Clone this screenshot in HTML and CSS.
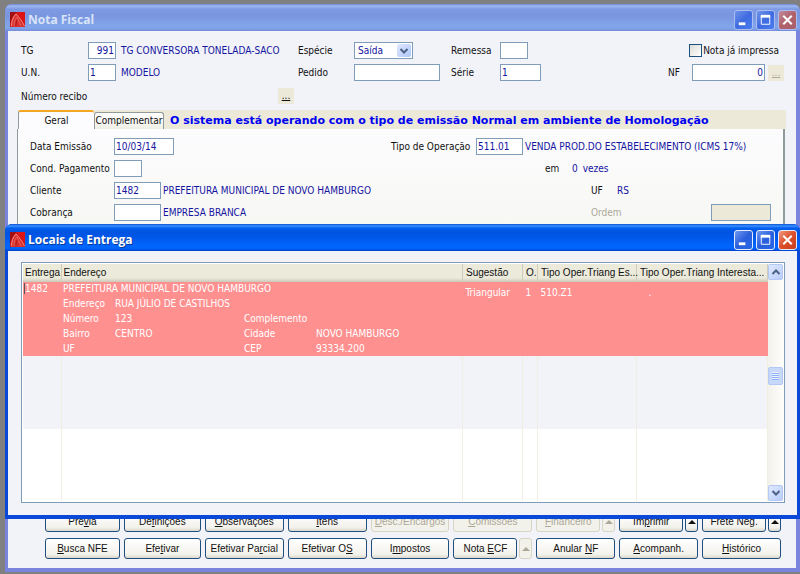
FILE: index.html
```
<!DOCTYPE html>
<html lang="pt-BR">
<head>
    <meta charset="UTF-8">
    <meta name="viewport" content="width=device-width, initial-scale=1.0">
    <title>Nota Fiscal</title>
    <link rel="stylesheet" href="styles.css">
</head>
<body>
    <svg width="0" height="0" class="sprites" aria-hidden="true">
        <symbol id="app-icon" viewBox="0 0 15 15">
            <rect width="15" height="15" fill="#d01416"/>
            <path d="M0 0h6L2 6 0 12z" fill="#a01012"/>
            <path d="M6 0h9v12L9 3z" fill="#dc1416"/>
            <path d="M1 15C1 9 3 4 6 2c3 3 6 8 9 13z" fill="#d9302e"/>
            <path d="M1.500 14C1.500 9 3 5 6 2M6 2c3 3 6 7 8.500 12" fill="none" stroke="#f59a94" stroke-width="0.9"/>
            <path d="M4 14c0-4 1-7 3-9M7 5l4 9" fill="none" stroke="#ee6a64" stroke-width="0.8"/>
            <path d="M6 14c0-2 0-4 1-6" fill="none" stroke="#9c1012" stroke-width="0.8"/>
        </symbol>
        <symbol id="win-min" viewBox="0 0 18 18"><path d="M4 13h7" stroke="#fff" stroke-width="3"/></symbol>
        <symbol id="win-max" viewBox="0 0 18 18"><path d="M4 5h10" stroke="#fff" stroke-width="3"/><path d="M4.500 5v8.500h9V5" fill="none" stroke="#fff"/></symbol>
        <symbol id="win-close" viewBox="0 0 18 18"><path d="M4.500 4.500l9 9M13.500 4.500l-9 9" stroke="#fff" stroke-width="2.200"/></symbol>
        <symbol id="chev-up" viewBox="0 0 10 10"><path d="M1.500 7L5 3.500 8.500 7" fill="none" stroke="#4d6185" stroke-width="2"/></symbol>
        <symbol id="chev-down" viewBox="0 0 10 10"><path d="M1.500 3L5 6.500 8.500 3" fill="none" stroke="#4d6185" stroke-width="2"/></symbol>
        <symbol id="arrow-up" viewBox="0 0 8 4"><path d="M0 4l4-4 4 4z" fill="currentColor"/></symbol>
    </svg>

    <main class="window inactive">
        <header class="titlebar">
            <svg class="app-icon"><use href="#app-icon"/></svg>
            <h1>Nota Fiscal</h1>
            <button class="win-btn" aria-label="Minimizar"><svg><use href="#win-min"/></svg></button>
            <button class="win-btn" aria-label="Maximizar"><svg><use href="#win-max"/></svg></button>
            <button class="win-btn close" aria-label="Fechar"><svg><use href="#win-close"/></svg></button>
        </header>

        <div class="content">
            <form class="form top-form">
                <label for="tg">TG</label>
                <div class="field"><input id="tg" class="w-xs right" value="991"><output>TG CONVERSORA TONELADA-SACO</output></div>
                <label for="especie">Espécie</label>
                <div class="combo">
                    <select id="especie"><option>Saída</option></select>
                    <span class="combo-arrow"><svg><use href="#chev-down"/></svg></span>
                </div>
                <label for="remessa">Remessa</label>
                <input id="remessa" class="w-xs">
                <div class="field end check"><input type="checkbox" id="impressa"><label for="impressa">Nota já impressa</label></div>

                <label for="un">U.N.</label>
                <div class="field"><input id="un" class="w-xs" value="1"><output>MODELO</output></div>
                <label for="pedido">Pedido</label>
                <input id="pedido" class="w-lg">
                <label for="serie">Série</label>
                <input id="serie" class="w-sm" value="1">
                <div class="field end nf"><label for="nf">NF</label><input id="nf" class="w-md right" value="0"><button type="button" class="dots" disabled>...</button></div>

                <span class="recibo">Número recibo</span>
                <button type="button" class="dots recibo-btn" aria-label="Número recibo">...</button>
            </form>

            <div class="tabs">
                <button class="tab active">Geral</button>
                <button class="tab">Complementar</button>
                <p class="notice">O sistema está operando com o tipo de emissão Normal em ambiente de Homologação</p>
            </div>

            <section class="panel">
                <form class="form panel-form">
                    <label for="data">Data Emissão</label>
                    <div class="field"><input id="data" class="w-date" value="10/03/14"></div>
                    <label for="operacao">Tipo de Operação</label>
                    <div class="field"><input id="operacao" class="w-code" value="511.01"><output>VENDA PROD.DO ESTABELECIMENTO (ICMS 17%)</output></div>

                    <label for="cond">Cond. Pagamento</label>
                    <div class="field"><input id="cond" class="w-xs"></div>
                    <div class="field parcelas"><span>em</span><output>0</output><output>vezes</output></div>

                    <label for="cliente">Cliente</label>
                    <div class="field"><input id="cliente" class="w-code" value="1482"><output>PREFEITURA MUNICIPAL DE NOVO HAMBURGO</output></div>
                    <div class="field uf"><span>UF</span><output>RS</output></div>

                    <label for="cobranca">Cobrança</label>
                    <div class="field"><input id="cobranca" class="w-code"><output>EMPRESA BRANCA</output></div>
                    <div class="field uf ordem"><label for="ordem">Ordem</label><input id="ordem" class="w-date" disabled></div>
                </form>
            </section>

            <div class="actions">
                <button>Pré<u>v</u>ia</button>
                <button>De<u>f</u>inições</button>
                <button><u>O</u>bservações</button>
                <button><u>I</u>tens</button>
                <button disabled><u>D</u>esc./Encargos</button>
                <button disabled><u>C</u>omissões</button>
                <div class="split">
                    <button disabled><u>F</u>inanceiro</button>
                    <button class="more" aria-label="Mais" disabled><svg><use href="#arrow-up"/></svg></button>
                </div>
                <div class="split">
                    <button>Im<u>p</u>rimir</button>
                    <button class="more" aria-label="Mais"><svg><use href="#arrow-up"/></svg></button>
                </div>
                <div class="split">
                    <button>Frete Ne<u>g</u>.</button>
                    <button class="more" aria-label="Mais"><svg><use href="#arrow-up"/></svg></button>
                </div>

                <button><u>B</u>usca NFE</button>
                <button>Efe<u>t</u>ivar</button>
                <button>Efetivar Pa<u>r</u>cial</button>
                <button>Efetivar O<u>S</u></button>
                <button>I<u>m</u>postos</button>
                <div class="split">
                    <button>Nota <u>E</u>CF</button>
                    <button class="more" aria-label="Mais" disabled><svg><use href="#arrow-up"/></svg></button>
                </div>
                <button>Anular <u>N</u>F</button>
                <button><u>A</u>companh.</button>
                <button><u>H</u>istórico</button>
            </div>
        </div>
    </main>

    <section class="window dialog">
        <header class="titlebar">
            <svg class="app-icon"><use href="#app-icon"/></svg>
            <h2>Locais de Entrega</h2>
            <button class="win-btn" aria-label="Minimizar"><svg><use href="#win-min"/></svg></button>
            <button class="win-btn" aria-label="Maximizar"><svg><use href="#win-max"/></svg></button>
            <button class="win-btn close" aria-label="Fechar"><svg><use href="#win-close"/></svg></button>
        </header>

        <div class="content">
            <div class="grid-box">
                <table>
                    <colgroup>
                        <col class="c-entrega">
                        <col>
                        <col class="c-sugestao">
                        <col class="c-o">
                        <col class="c-estadual">
                        <col class="c-inter">
                    </colgroup>
                    <thead>
                        <tr>
                            <th>Entrega</th>
                            <th>Endereço</th>
                            <th>Sugestão</th>
                            <th>O.</th>
                            <th>Tipo Oper.Triang Es...</th>
                            <th>Tipo Oper.Triang Interesta...</th>
                        </tr>
                    </thead>
                    <tbody>
                        <tr class="selected">
                            <td class="current">1482</td>
                            <td>
                                <div class="address">
                                    <span class="full">PREFEITURA MUNICIPAL DE NOVO HAMBURGO</span>
                                    <span>Endereço</span><span class="rest">RUA JÚLIO DE CASTILHOS</span>
                                    <span>Número</span><span>123</span><span>Complemento</span><span></span>
                                    <span>Bairro</span><span>CENTRO</span><span>Cidade</span><span>NOVO HAMBURGO</span>
                                    <span>UF</span><span></span><span>CEP</span><span>93334.200</span>
                                </div>
                            </td>
                            <td class="lower">Triangular</td>
                            <td class="lower">1</td>
                            <td class="lower">510.Z1</td>
                            <td class="lower dot">.</td>
                        </tr>
                        <tr class="alt"><td></td><td></td><td></td><td></td><td></td><td></td></tr>
                        <tr><td></td><td></td><td></td><td></td><td></td><td></td></tr>
                    </tbody>
                </table>
                <div class="scrollbar">
                    <button aria-label="Subir"><svg><use href="#chev-up"/></svg></button>
                    <div class="track before"></div>
                    <div class="thumb"></div>
                    <div class="track after"></div>
                    <button aria-label="Descer"><svg><use href="#chev-down"/></svg></button>
                </div>
            </div>
        </div>
    </section>
</body>
</html>
```

FILE: styles.css
```
* {
    box-sizing: border-box;
}
body {
    margin: 0;
    padding: 4px 0 2px 5px;
    min-height: 100vh;
    display: flex;
    flex-direction: column;
    position: relative;
    background-color: #808080;
    font-family: "DejaVu Sans Condensed", "DejaVu Sans", sans-serif;
    font-size: 10px;
    line-height: 14px;
    color: #111;
}
button, input, select {
    font: inherit;
    color: inherit;
    margin: 0;
    padding: 0;
}
.sprites {
    position: absolute;
}

/* windows */
.window {
    display: flex;
    flex-direction: column;
    flex: 1;
    background-color: #0a48d8;
    border-radius: 7px 7px 0 0;
    padding: 0 3px 4px;
}
.inactive {
    background-color: #7b84dc;
    padding-right: 4px;
}
.titlebar {
    display: flex;
    align-items: center;
    gap: 3px;
    height: 27px;
    margin: 0 -3px;
    padding: 4px 3px 0 5px;
    border-radius: 7px 7px 0 0;
    background: linear-gradient(#0a50d0 0, #3a92ff 2px, #0560f0 4px, #0053e0 8px, #0058ea 14px, #0066ff 22px, #0060f5 25px, #003fc8 27px);
}
.inactive .titlebar {
    margin-right: -4px;
    background: linear-gradient(#7088d8 0, #9db9f0 2px, #7f9ae4 5px, #7a96df 12px, #82a5ea 22px, #7fa0e6 25px, #7388d8 27px);
}
.titlebar h1, .titlebar h2 {
    flex: 1;
    margin: 0;
    font-family: "Open Sans", "Noto Sans", sans-serif;
    font-size: 12px;
    line-height: 16px;
    font-weight: bold;
    color: #fff;
    text-shadow: 1px 1px 0 #0a3a9a;
}
.inactive .titlebar h1 {
    color: #d9e4f8;
    text-shadow: none;
}
.app-icon {
    width: 15px;
    height: 15px;
}
.win-btn {
    width: 19px;
    height: 20px;
    border: 1px solid #e6edfb;
    border-radius: 3px;
    background: linear-gradient(135deg, #6f97f0, #2a5fdc 50%, #2566e8);
}
.win-btn svg {
    display: block;
    width: 17px;
    height: 18px;
}
.win-btn.close {
    background: linear-gradient(135deg, #f09a80, #dd4d2a 50%, #c8401c);
}
.inactive .win-btn {
    border-color: #a9bdf0;
    background: linear-gradient(135deg, #6f93ea, #3f6be0 50%, #4a7df0);
}
.inactive .win-btn.close {
    background: linear-gradient(135deg, #c08a9c, #b0626c 50%, #a8606a);
}
.content {
    flex: 1;
    display: flex;
    flex-direction: column;
    background-color: #f2f3f8;
}

/* forms */
.form {
    display: grid;
    align-items: center;
    grid-auto-rows: 17px;
    row-gap: 5px;
    white-space: nowrap;
}
.top-form {
    grid-template-columns: 67px 210px 56px 97px 49px 50px 1fr;
    grid-template-rows: 17px 17px 18px;
    padding: 11px 12px 6px 13px;
}
.field {
    display: flex;
    align-items: center;
    gap: 5px;
}
.end {
    justify-content: flex-end;
    gap: 3px;
}
.check {
    gap: 1px;
    padding-right: 5px;
}
.nf label {
    margin-right: 9px;
}
output, .form input, .form select {
    color: #1414a0;
}
.form input, .form select {
    height: 17px;
    border: 1px solid #7f9db9;
    background-color: #fff;
    padding: 0 1px;
    outline: none;
}
.form input[type="checkbox"] {
    appearance: none;
    width: 13px;
    height: 13px;
    border-color: #1c5180;
    background: linear-gradient(135deg, #dcdcd6, #fff);
}
.form input:disabled {
    background-color: #ece9d8;
}
.form .right {
    text-align: right;
}
.w-xs { width: 28px; }
.w-sm { width: 41px; }
.w-code { width: 47px; }
.w-date { width: 60px; }
.w-md { width: 73px; }
.w-lg { width: 86px; }
.combo {
    position: relative;
    width: 59px;
    height: 17px;
}
.combo select {
    display: block;
    width: 100%;
    appearance: none;
    border-radius: 0;
    padding-left: 3px;
}
.combo-arrow {
    position: absolute;
    top: 2px;
    right: 2px;
    width: 14px;
    height: 13px;
    display: flex;
    align-items: center;
    justify-content: center;
    border-radius: 2px;
    background: linear-gradient(135deg, #dfe9ff, #afc6f8);
    pointer-events: none;
}
.combo-arrow svg, .scrollbar svg {
    width: 10px;
    height: 10px;
}
.dots {
    width: 16px;
    height: 16px;
    border: 0;
    background-color: #ece9d8;
    text-decoration: underline;
}
.dots:disabled {
    color: #aca899;
}
.recibo {
    grid-column: 1;
    align-self: end;
}
.recibo-btn {
    grid-column: 2;
    place-self: end;
    margin-right: 4px;
}

/* tabs */
.tabs {
    display: flex;
    align-items: flex-end;
    height: 19px;
    margin: 0 10px;
    background-color: #ece9d8;
}
.tab {
    height: 17px;
    width: 70px;
    border: 1px solid #919b9c;
    border-bottom: 0;
    border-radius: 3px 3px 0 0;
    background: linear-gradient(#fff, #efeee6);
}
.tab.active {
    width: 76px;
    height: 19px;
    border-top: 2px solid #f5a623;
    border-right: 0;
    background: #fcfcfe;
}
.notice {
    flex: 1;
    margin: 0;
    padding-left: 6px;
    font-family: "DejaVu Sans", Verdana, sans-serif;
    font-size: 11px;
    line-height: 17px;
    font-weight: bold;
    color: #0000f0;
    white-space: nowrap;
}
.panel {
    flex: 1;
    margin: 0 11px 0 9px;
    padding: 9px 12px;
    border: 1px solid #919b9c;
    border-width: 0 2px 1px 1px;
    background: linear-gradient(#fcfcfe, #f7f7f4 100px);
}
.panel-form {
    grid-template-columns: 84px 277px 85px 1fr;
}
.panel-form .field {
    gap: 2px;
}
.parcelas, .uf {
    grid-column: 4;
}
.panel-form .parcelas {
    padding-left: 69px;
    gap: 5px;
}
.parcelas span {
    width: 22px;
}
.panel-form .uf {
    padding-left: 115px;
}
.uf span {
    width: 24px;
}
.ordem {
    justify-content: space-between;
    color: #aca899;
}

/* action buttons */
.actions {
    display: grid;
    grid-template-columns: 75fr 77fr repeat(7, 79fr);
    grid-auto-rows: 21px;
    gap: 6px 4px;
    padding: 8px 15px 9px 37px;
    font-family: "Liberation Sans", Arial, sans-serif;
}
.actions button {
    width: 100%;
    height: 21px;
    min-width: 0;
    border: 1px solid #1f4f7f;
    border-radius: 3px;
    background: linear-gradient(#fff, #f3f2ec 80%, #dcd8cc);
    white-space: nowrap;
}
.actions button:disabled {
    color: #aca899;
    border-color: #d8d5c4;
    background: #f3f2ea;
}
.split {
    display: flex;
    gap: 2px;
}
.actions .more {
    flex: 0 0 13px;
}
.more svg {
    display: block;
    width: 8px;
    height: 4px;
    margin: 0 auto;
}

/* delivery places window */
.dialog {
    position: absolute;
    top: 224px;
    right: 0;
    bottom: 55px;
    left: 5px;
}
.grid-box {
    flex: 1;
    display: flex;
    margin: 11px 12px 12px 13px;
    border: 1px solid #7f9db9;
    background-color: #fff;
    padding: 1px 0 1px 1px;
}
table {
    flex: 1;
    width: 100%;
    table-layout: fixed;
    border-collapse: collapse;
}
.c-entrega { width: 38px; }
.c-sugestao { width: 60px; }
.c-o { width: 15px; }
.c-estadual { width: 99px; }
.c-inter { width: 131px; }
thead tr {
    height: 18px;
    background: linear-gradient(#ebeadb 14px, #cbc7b8 18px);
}
th {
    padding: 0 0 0 2px;
    font-family: "Liberation Sans", Arial, sans-serif;
    font-weight: normal;
    text-align: left;
    white-space: nowrap;
    border-right: 1px solid #d0ccbc;
}
td {
    padding: 0 2px;
    vertical-align: top;
    border-right: 1px solid #f1efe2;
}
.alt {
    background-color: #f2f3f8;
}
.selected {
    height: 73px;
    background-color: #ff9090;
    color: #fff;
}
.selected td {
    border-right: 0;
}
.current {
    background: linear-gradient(#555, #555) 1px 1px / 1px 11px no-repeat;
}
.address {
    display: grid;
    grid-template-columns: 52px 129px 72px 1fr;
    grid-auto-rows: 14px;
    row-gap: 1px;
    white-space: nowrap;
}
.full {
    grid-column: 1 / -1;
}
.rest {
    grid-column: 2 / -1;
}
th:nth-child(n+3), td:nth-child(n+3) {
    padding-left: 3px;
}
td.lower {
    padding-top: 4px;
}
td.dot {
    padding-left: 12px;
}
.scrollbar {
    width: 16px;
    display: flex;
    flex-direction: column;
    background: linear-gradient(90deg, #f3f1ec, #fefefb);
}
.scrollbar button, .thumb {
    width: 15px;
    height: 16px;
    border: 1px solid #b4c8f6;
    border-radius: 2px;
    background: linear-gradient(135deg, #dfe9ff, #b9cdfa);
}
.scrollbar svg {
    display: block;
    margin: 0 auto;
}
.thumb {
    height: 18px;
    background: repeating-linear-gradient(#eef4fe 0 1px, #8cb0f8 1px 2px) 3px 4px / 7px 8px no-repeat, #c8d8fb;
}
.before {
    flex: 88;
}
.after {
    flex: 101;
}
```
